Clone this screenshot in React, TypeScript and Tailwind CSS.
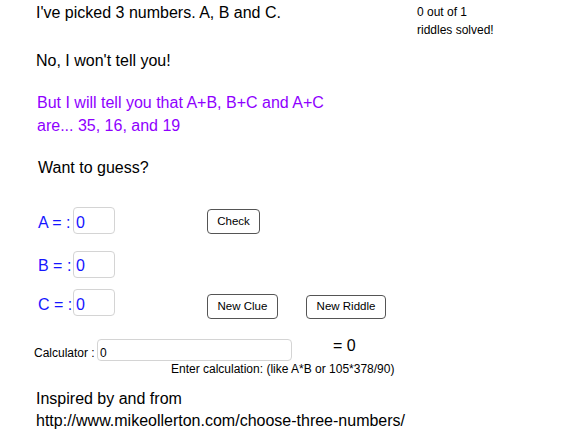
import React from "react"

// GeoGebra style riddle sheet: "choose three numbers"
const rows = [
  { name: "A", gap: "mt-[27px]" },
  { name: "B", gap: "mt-[16px]" },
  { name: "C", gap: "mt-[11px]" },
]

function GgbButton({ label, className }: { label: string; className: string }) {
  return (
    <button
      type="button"
      className={`flex items-center justify-center rounded-[4px] border-[1.5px] border-[#555555] bg-white text-[11.5px] leading-none text-black ${className}`}
    >
      {label}
    </button>
  )
}

function InputRow({ name, gap }: { name: string; gap: string }) {
  return (
    <div className={`flex items-start pl-[38px] ${gap}`}>
      <span className="mt-[3.5px] w-[35px] text-[16px] leading-[24px] text-[#1616ff]">{name} = :</span>
      <input
        readOnly
        value="0"
        className="h-[27px] w-[42px] rounded-[4px] border border-[#d4d4d4] bg-white pb-0 pl-[2px] pt-[4px] text-[16px] text-[#1616ff] outline-none"
      />
      {name === "A" && <GgbButton label="Check" className="ml-[92px] mt-[2px] h-[25px] w-[53px]" />}
      {name === "C" && (
        <>
          <GgbButton label="New Clue" className="ml-[92px] mt-[5px] h-[25px] w-[71px]" />
          <GgbButton label="New Riddle" className="ml-[28px] mt-[6px] h-[24px] w-[80px]" />
        </>
      )}
    </div>
  )
}

export default function App() {
  return (
    <div className="h-[430px] w-[563px] overflow-hidden bg-white font-['Liberation_Sans',Arial,sans-serif] text-black">
      {/* header line + score (score hangs below the first line) */}
      <div className="flex h-[25px] items-start">
        <p className="w-[417px] pl-[36px] pt-[1px] text-[16px] leading-[24px]">I've picked 3 numbers. A, B and C.</p>
        <div className="pt-[3px] text-[12px] leading-[18px]">
          <p>0 out of 1</p>
          <p>riddles solved!</p>
        </div>
      </div>

      <p className="mt-[24px] pl-[36px] text-[16px] leading-[24px]">No, I won't tell you!</p>

      <p className="mt-[18px] pl-[37px] text-[16px] leading-[23px] text-[#8f00ff]">
        But I will tell you that A+B, B+C and A+C
        <br />
        are... 35, 16, and 19
      </p>

      <p className="mt-[19px] pl-[38px] text-[16px] leading-[24px]">Want to guess?</p>

      {rows.map((r) => (
        <InputRow key={r.name} name={r.name} gap={r.gap} />
      ))}

      {/* calculator */}
      <div className="mt-[20px] flex items-start pl-[34px]">
        <span className="mt-[5.5px] w-[63px] text-[12px] leading-[16px]">Calculator :</span>
        <input
          readOnly
          value="0"
          className="h-[22px] w-[195px] rounded-[4px] border border-[#d4d4d4] bg-white pb-0 pl-[2px] pt-[5px] text-[12px] text-black outline-none"
        />
        <span className="ml-[41px] mt-[-1px] text-[16px] leading-[16px]">= 0</span>
      </div>
      <p className="pl-[171px] text-[12px] leading-[16px]">Enter calculation: (like A*B or 105*378/90)</p>

      <div className="mt-[11px] pl-[36px] text-[16px] leading-[22px]">
        <p>Inspired by and from</p>
        <p>http://www.mikeollerton.com/choose-three-numbers/</p>
      </div>
    </div>
  )
}
